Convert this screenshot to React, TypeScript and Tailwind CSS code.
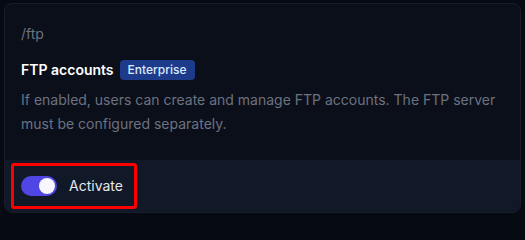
const App = () => {
  return (
    <div className="min-h-screen bg-[#060a13] px-1 pt-[3px] pb-1 font-['Inter',sans-serif]">
      <div className="overflow-hidden rounded-lg border border-[#181d29] bg-[#0b0f1a]">
        <div className="px-4 pt-5 pb-6">
          <div className="text-sm leading-5 text-[#6b7280]">/ftp</div>
          <div className="mt-4 flex items-center gap-1.5">
            <h3 className="text-sm leading-5 font-semibold text-white">FTP accounts</h3>
            <span className="rounded bg-[#1e3a8a] px-2 text-xs leading-5 font-medium text-[#dbeafe]">
              Enterprise
            </span>
          </div>
          <p className="mt-2 text-sm leading-6 text-[#6b7280]">
            If enabled, users can create and manage FTP accounts. The FTP server must be configured separately.
          </p>
        </div>
        <div className="bg-[#111827] px-4 py-4">
          <div className="relative flex items-center gap-3">
            <span className="absolute -top-[13px] -left-[10px] h-[46px] w-[126px] rounded-[3px] border-[3px] border-[#ff0000]" />
            <button className="relative inline-flex h-5 w-9 items-center rounded-full bg-[#4f46e5]">
              <span className="absolute right-0.5 h-4 w-4 rounded-full bg-[#f8f8fc]" />
            </button>
            <span className="text-sm leading-5 text-[#e5e7eb]">Activate</span>
          </div>
        </div>
      </div>
    </div>
  );
};

export default App;
